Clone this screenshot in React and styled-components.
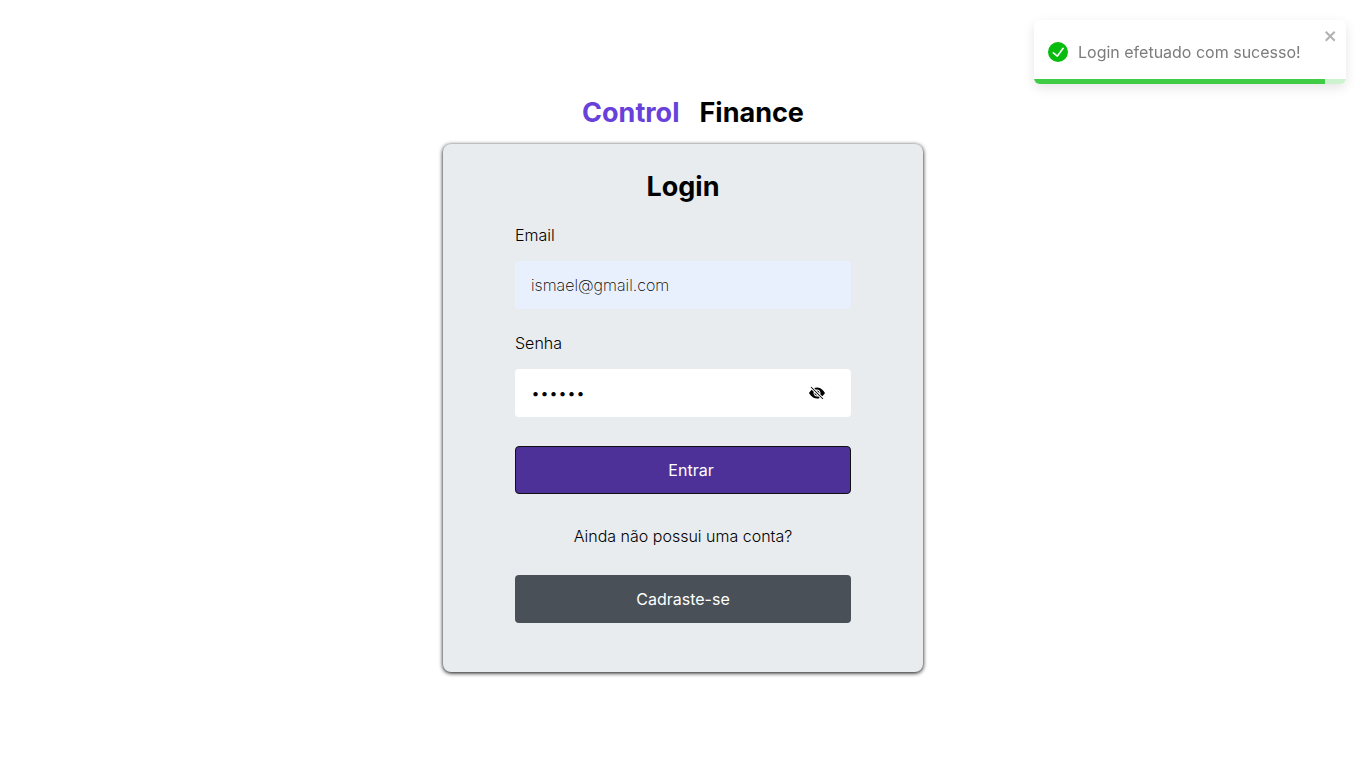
import React, { useState } from "react";
import styled, { createGlobalStyle, css } from "styled-components";
import { BsEyeFill, BsEyeSlashFill } from "react-icons/bs";

const GlobalStyle = createGlobalStyle`
  *, *::before, *::after { box-sizing: border-box; }
  body {
    margin: 0;
    background: #fff;
    color: #000;
    font-family: Inter, "Liberation Sans", sans-serif;
    font-size: 16px;
  }
  h1, h2, p { margin: 0; }
  button, input { font: inherit; }
`;

const Page = styled.main`
  min-height: 100vh;
  display: flex;
  flex-direction: column;
  align-items: center;
  justify-content: center;
  gap: 14px;
`;

const Brand = styled.h1`
  display: flex;
  gap: 20px;
  padding-left: 20px;
  font-size: 27px;
  line-height: 34px;
  font-weight: 700;
`;

const BrandAccent = styled.span`
  color: #6741d9;
`;

const Card = styled.form`
  width: 100%;
  max-width: 480px;
  display: flex;
  flex-direction: column;
  padding: 26px 72px 49px;
  background: #e9ecef;
  border-radius: 8px;
  box-shadow: 0 1px 4px #000;
`;

const Title = styled.h2`
  font-size: 27px;
  line-height: 34px;
  font-weight: 700;
  text-align: center;
  margin-bottom: 21px;
`;

const Field = styled.div`
  display: flex;
  flex-direction: column;
  gap: 16px;
  margin-bottom: 24px;
`;

const Label = styled.label`
  line-height: 20px;
  font-weight: 300;
`;

const InputBox = styled.div`
  display: flex;
  align-items: center;
  height: 48px;
  padding: 0 16px;
  border-radius: 4px;
  background: ${({ $filled }) => ($filled ? "#e8f0fe" : "#fff")};
`;

const Input = styled.input`
  flex: 1;
  min-width: 0;
  padding: 0;
  border: 0;
  outline: 0;
  background: transparent;
  color: #000;
  font-weight: ${({ type }) => (type === "password" ? 300 : 200)};
`;

const EyeButton = styled.button`
  display: flex;
  padding: 0;
  margin-right: 10px;
  border: 0;
  background: none;
  color: #000;
  cursor: pointer;
`;

const control = css`
  height: 48px;
  display: flex;
  align-items: center;
  justify-content: center;
  border-radius: 4px;
  color: #fff;
  font-weight: 400;
`;

const SubmitButton = styled.button`
  ${control}
  margin-top: 5px;
  padding: 0 0 0 16px;
  border: 1px solid #101010;
  background: #4e3198;
  cursor: pointer;
`;

const Hint = styled.p`
  margin: 32px 0 29px;
  line-height: 20px;
  font-weight: 300;
  text-align: center;
`;

const SignupLink = styled.a`
  ${control}
  background: #495057;
  text-decoration: none;
`;

const Toast = styled.div`
  position: fixed;
  top: 20px;
  right: 20px;
  width: 312px;
  height: 64px;
  display: flex;
  align-items: center;
  gap: 10px;
  padding: 0 14px;
  overflow: hidden;
  border-radius: 6px;
  background: #fff;
  color: #7c7c7c;
  box-shadow: 0 4px 12px rgba(0, 0, 0, 0.1);
`;

const SuccessIcon = styled.svg`
  width: 20px;
  height: 20px;
  fill: #07bc0c;
`;

const CloseButton = styled.button`
  position: absolute;
  top: 8px;
  right: 8px;
  display: flex;
  padding: 0;
  border: 0;
  background: none;
  color: #000;
  opacity: 0.3;
  cursor: pointer;
`;

const ProgressTrack = styled.div`
  position: absolute;
  inset: auto 0 0 0;
  height: 5px;
  background: #cdf2ce;
`;

const ProgressBar = styled.div`
  height: 100%;
  background: #41cc46;
`;

export default function App() {
  const [email, setEmail] = useState("ismael@gmail.com");
  const [password, setPassword] = useState("123456");
  const [visible, setVisible] = useState(false);
  const [toastOpen, setToastOpen] = useState(true);
  const progress = 93.3;

  return (
    <>
      <GlobalStyle />
      <Page>
        <Brand>
          <BrandAccent>Control</BrandAccent>
          <span>Finance</span>
        </Brand>
        <Card onSubmit={(e) => e.preventDefault()}>
          <Title>Login</Title>
          <Field>
            <Label htmlFor="email">Email</Label>
            <InputBox $filled>
              <Input
                id="email"
                type="email"
                value={email}
                onChange={(e) => setEmail(e.target.value)}
              />
            </InputBox>
          </Field>
          <Field>
            <Label htmlFor="password">Senha</Label>
            <InputBox>
              <Input
                id="password"
                type={visible ? "text" : "password"}
                value={password}
                onChange={(e) => setPassword(e.target.value)}
              />
              <EyeButton
                type="button"
                aria-label="Mostrar senha"
                onClick={() => setVisible(!visible)}
              >
                {visible ? <BsEyeFill size={16} /> : <BsEyeSlashFill size={16} />}
              </EyeButton>
            </InputBox>
          </Field>
          <SubmitButton type="submit">Entrar</SubmitButton>
          <Hint>Ainda não possui uma conta?</Hint>
          <SignupLink href="#cadastro">Cadraste-se</SignupLink>
        </Card>
      </Page>
      {toastOpen && (
        <Toast role="alert">
          <SuccessIcon viewBox="0 0 24 24" aria-hidden="true">
            <path d="M12 0a12 12 0 1012 12A12.014 12.014 0 0012 0zm6.927 8.2l-6.845 9.289a1.011 1.011 0 01-1.43.188l-4.888-3.908a1 1 0 111.25-1.562l4.076 3.261 6.227-8.451a1 1 0 111.61 1.183z" />
          </SuccessIcon>
          <span>Login efetuado com sucesso!</span>
          <CloseButton
            type="button"
            aria-label="Fechar"
            onClick={() => setToastOpen(false)}
          >
            <svg width="14" height="16" viewBox="0 0 14 16" fill="currentColor" aria-hidden="true">
              <path
                fillRule="evenodd"
                d="M7.71 8.23l3.75 3.75-1.48 1.48-3.75-3.75-3.75 3.75L1 11.98l3.75-3.75L1 4.48 2.48 3l3.75 3.75L9.98 3l1.48 1.48-3.75 3.75z"
              />
            </svg>
          </CloseButton>
          <ProgressTrack>
            <ProgressBar style={{ width: `${progress}%` }} />
          </ProgressTrack>
        </Toast>
      )}
    </>
  );
}
